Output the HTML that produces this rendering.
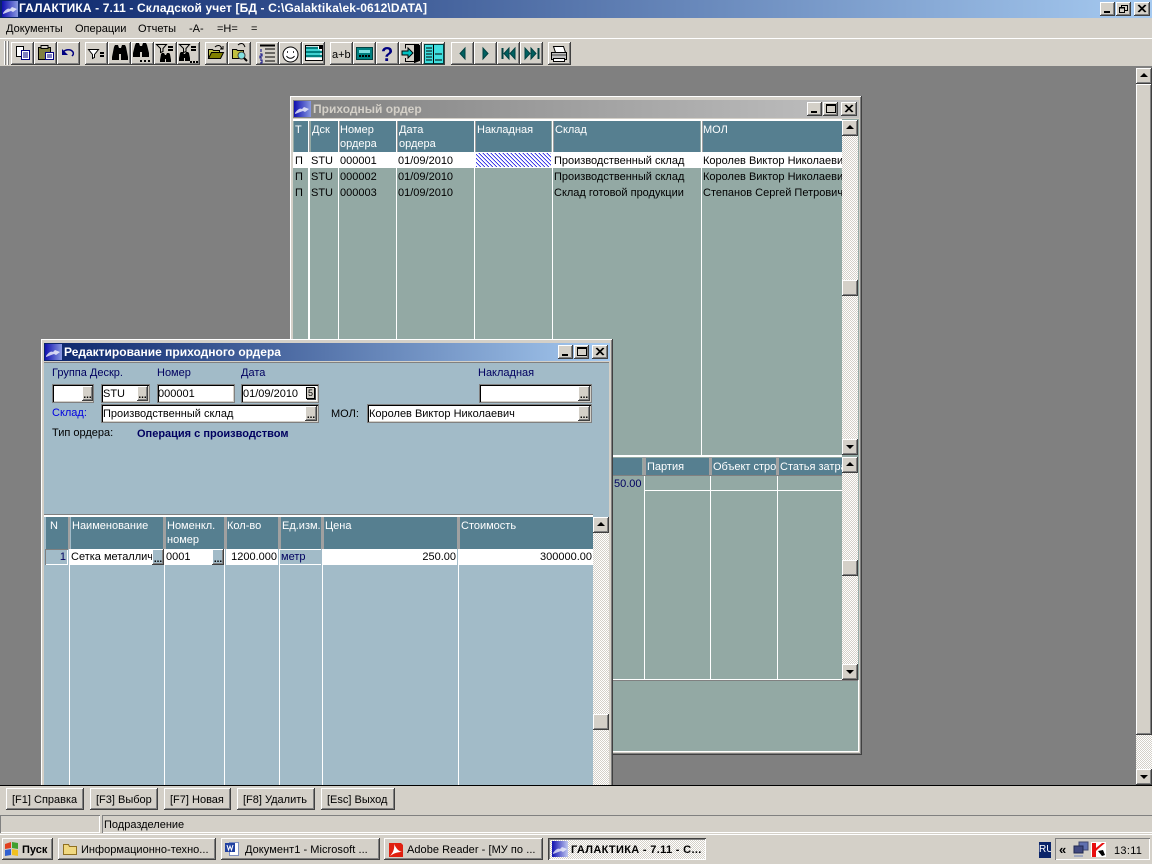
<!DOCTYPE html>
<html><head><meta charset="utf-8"><style>
html,body{margin:0;padding:0;width:1152px;height:864px;overflow:hidden;background:#808080}
div{position:absolute;box-sizing:border-box}
.t{position:absolute;white-space:nowrap;font:11px/13px "Liberation Sans","Noto Sans CJK SC",sans-serif;color:#000;margin-top:2px}
.w{color:#fff}.n{color:#000060}
.b{font-weight:bold;font-size:12px}
.r{box-shadow:inset -1px -1px #404040,inset 1px 1px #fff,inset -2px -2px #808080;background:#d4d0c8}
.c{background:repeating-conic-gradient(#fff 0 25%,#d4d0c8 0 50%) 0 0/2px 2px}
.h{background:#567f90}
.l{background:#fff}
.f{background:#fff;box-shadow:inset 1px 1px #000,inset -1px -1px #d4d0c8;outline:1px solid #808080;outline-offset:0}
.d{font:bold 10px/9px "Liberation Sans",sans-serif;text-align:center;color:#000;letter-spacing:0}
svg{position:absolute;display:block}
</style></head><body>

<!-- Title bar -->
<div style="left:0;top:0;width:1152px;height:18px;background:linear-gradient(90deg,#0a246a,#a6caf0)"></div>
<div style="left:2px;top:1px;width:16px;height:16px;background:linear-gradient(90deg,#1010b0,#8898e0)"></div>
<svg style="left:2px;top:1px" width="16" height="16"><path d="M1 12C4 8 6 7 8 8L10 6l5 2-4 3-2-1C6 11 4 12 1 13z" fill="#fff" opacity=".75"/></svg>
<div class="t w b" style="left:19px;top:0;letter-spacing:.13px">ГАЛАКТИКА - 7.11 - Складской учет [БД - C:\Galaktika\ek-0612\DATA]</div>
<div class="r" style="left:1100px;top:2px;width:15px;height:14px"></div>
<div style="left:1104px;top:11px;width:6px;height:2px;background:#000"></div>
<div class="r" style="left:1116px;top:2px;width:15px;height:14px"></div>
<svg style="left:1116px;top:2px" width="15" height="14"><path d="M5.500 5.500V3.500h6v5h-3M3.500 5.500h5v5h-5z" fill="none" stroke="#000"/><path d="M5 3.500h7M3 6h6" stroke="#000"/></svg>
<div class="r" style="left:1134px;top:2px;width:16px;height:14px"></div>
<svg style="left:1134px;top:2px" width="16" height="14"><path d="M4 3l7 7M5 3l7 7M11 3l-7 7M12 3l-7 7" stroke="#000"/></svg>

<!-- Menu -->
<div style="left:0;top:18px;width:1152px;height:20px;background:#d4d0c8"></div>
<div class="t" style="left:6px;top:21px">Документы</div>
<div class="t" style="left:75px;top:21px">Операции</div>
<div class="t" style="left:138px;top:21px">Отчеты</div>
<div class="t" style="left:189px;top:21px">-А-</div>
<div class="t" style="left:217px;top:21px">=Н=</div>
<div class="t" style="left:251px;top:21px">=</div>

<!-- Toolbar -->
<div style="left:0;top:38px;width:1152px;height:29px;background:#d4d0c8;border-top:1px solid #fff;border-bottom:1px solid #808080"></div>
<div style="left:4px;top:41px;width:2px;height:24px;background:#fff;border-right:1px solid #808080"></div>
<div style="left:7px;top:41px;width:2px;height:24px;background:#fff;border-right:1px solid #808080"></div>
<div class="r" style="left:11px;top:42px;width:23px;height:23px"></div>
<div class="r" style="left:34px;top:42px;width:23px;height:23px"></div>
<div class="r" style="left:57px;top:42px;width:23px;height:23px"></div>
<div class="r" style="left:85px;top:42px;width:23px;height:23px"></div>
<div class="r" style="left:108px;top:42px;width:23px;height:23px"></div>
<div class="r" style="left:131px;top:42px;width:23px;height:23px"></div>
<div class="r" style="left:154px;top:42px;width:23px;height:23px"></div>
<div class="r" style="left:177px;top:42px;width:23px;height:23px"></div>
<div class="r" style="left:205px;top:42px;width:23px;height:23px"></div>
<div class="r" style="left:228px;top:42px;width:23px;height:23px"></div>
<div class="r" style="left:256px;top:42px;width:23px;height:23px"></div>
<div class="r" style="left:279px;top:42px;width:23px;height:23px"></div>
<div class="r" style="left:302px;top:42px;width:23px;height:23px"></div>
<div class="r" style="left:330px;top:42px;width:23px;height:23px"></div>
<div class="r" style="left:353px;top:42px;width:23px;height:23px"></div>
<div class="r" style="left:376px;top:42px;width:23px;height:23px"></div>
<div class="r" style="left:399px;top:42px;width:23px;height:23px"></div>
<div class="r" style="left:422px;top:42px;width:23px;height:23px"></div>
<div class="r" style="left:451px;top:42px;width:23px;height:23px"></div>
<div class="r" style="left:474px;top:42px;width:23px;height:23px"></div>
<div class="r" style="left:497px;top:42px;width:23px;height:23px"></div>
<div class="r" style="left:520px;top:42px;width:23px;height:23px"></div>
<div class="r" style="left:548px;top:42px;width:23px;height:23px"></div>

<svg style="left:0;top:38px" width="580" height="29" fill="none" stroke="#000">
<!-- copy -->
<path d="M16.500 8.500h7v10h-7z" fill="#fff"/><path d="M21.500 12.500h8v9h-8z" fill="#fff" stroke="#000080"/><path d="M23 15h5M23 17h5M23 19h5" stroke="#000080"/>
<!-- paste -->
<path d="M38.500 9.500h12v12h-12z" fill="#808040"/><path d="M41 7.500h7v3h-7z" fill="#d4d0c8"/><path d="M45.500 14.500h8v7h-8z" fill="#fff" stroke="#000080"/><path d="M47 17h5M47 19h5" stroke="#000080"/>
<!-- undo -->
<path d="M63 14c3-3 8-3 10 0 1 2 0 3-1 4" stroke="#000080" stroke-width="1.500"/><path d="M62 11v6h6z" fill="#000080" stroke="none"/>
<!-- filter= -->
<path d="M88.500 11.500h10l-4 5v3l-2 1v-4z" fill="#fff"/><path d="M100 15h4M100 18h4" stroke-width="2"/>
<!-- binoculars -->
<path d="M112 19l2-10 1-2h3l1 3h2l1-3h3l1 2 2 10v3h-7v-6h-2v6h-7z" fill="#000" stroke="none"/>
<path d="M133 15l2-8 1-2h3l1 3h2l1-3h3l1 2 2 8v4h-7v-5h-2v5h-7z" fill="#000" stroke="none"/><path d="M140 23h2M144 23h2M148 23h2" stroke-width="2"/>
<!-- filter binoc -->
<path d="M156.500 6.500h10l-3.500 4v3l-2.500 1v-4z"/><path d="M168 9h5M168 12h5" stroke-width="2"/><path d="M160 22l1-6 1-1h2l1 2h1l1-2h2l1 1 1 6v2h-5v-3h-1v3h-5z" fill="#000" stroke="none"/>
<path d="M179.500 6.500h10l-3.500 4v3l-2.500 1v-4z"/><path d="M191 9h5M191 12h5" stroke-width="2"/><path d="M179 20l1-5 1-1h2l1 2h1l1-2h2l1 1 1 5v3h-5v-3h-1v3h-5z" fill="#000" stroke="none"/><path d="M190 24h2M193 24h2M196 24h2" stroke-width="2"/>
<!-- open folders -->
<path d="M208.500 11.500h4l1 1h6v8h-11z" fill="#c0c040"/><path d="M208.500 20.500l3-6h12l-3 6z" fill="#808000"/><path d="M215 9c2-2 5-2 6 0l1 2m1-3v3h-3"/>
<path d="M232.500 11.500h4l1 1h6v8h-11z" fill="#c0c040"/><path d="M238 7c2-2 5-2 6 0l1 2"/><circle cx="241.500" cy="17.500" r="3.500" fill="#80e0e0" stroke="#404040"/><path d="M244 20l3 3" stroke-width="2"/>
<!-- list -->
<path d="M265 11h10M265 15h10M265 19h10M265 23h10"/><path d="M260 7.500h15" stroke-width="2"/><path d="M261 11v3M260 16h2v2h-2v2h2M260 22h2v3h-2" stroke="#000080"/>
<!-- smile -->
<circle cx="290.500" cy="16.500" r="7.500" fill="#fff"/><path d="M287 14h1M293 14h1" stroke-width="1.500"/><path d="M286.500 18c2 3 6 3 8 0"/>
<!-- form -->
<path d="M305.500 7.500h17v15h-17z" fill="#fff"/><path d="M306 10h12M306 14h16M306 18h16" stroke="#008080" stroke-width="2.500"/><path d="M306 12h14M306 16h14" stroke="#00e0e0"/><path d="M319.500 8.500h3v2h-3z" fill="#000"/>
<!-- a+b -->
<text x="332" y="20" font-family="Liberation Sans" font-size="11" fill="#000" stroke="none">a+b</text>
<!-- calc -->
<path d="M356.500 9.500h16v12h-16z" fill="#008080" stroke="#004040"/><path d="M359 12h11v3h-11z" fill="#80e0e0" stroke="none"/><path d="M359 18h11" stroke="#000" stroke-dasharray="2 1" stroke-width="2"/>
<!-- ? -->
<text x="381" y="23" font-family="Liberation Sans" font-weight="bold" font-size="20" fill="#000080" stroke="none">?</text>
<!-- door -->
<path d="M414.500 6.500v18l5-2v-15z" fill="#000"/><path d="M405 6.500h14M405 23.500h9M405.500 6.500v4M405.500 20v3"/><path d="M402 13h6v-3l5 5-5 5v-3h-6z" fill="#00c0c0" stroke="#000"/>
<!-- columns -->
<path d="M424.500 6.500h19v19h-19z" fill="#40e0e0" stroke="#004040"/><path d="M433.500 6.500v19M426 10h6M426 13h6M426 16h6M426 19h6M426 22h6M435 16h7M435 22h7"/>
<!-- nav -->
<path d="M465 10v11l-5-5.500z" fill="#006060" stroke="#004040"/>
<path d="M483 10v11l5-5.500z" fill="#006060" stroke="#004040"/>
<path d="M502.500 10v11" stroke-width="2" stroke="#004040"/><path d="M509 10v11l-5-5.500zM515 10v11l-5-5.500z" fill="#006060" stroke="#004040"/>
<path d="M538.500 10v11" stroke-width="2" stroke="#004040"/><path d="M525 10v11l5-5.500zM531 10v11l5-5.500z" fill="#006060" stroke="#004040"/>
<!-- print -->
<path d="M553.500 8.500h10l2 6h-10z" fill="#fff"/><path d="M551.500 14.500h15v7h-15z" fill="#c0c0c0"/><path d="M552 17h14" stroke="#404040"/><path d="M553.500 20.500h11v3h-11z" fill="#fff"/>
</svg>

<!-- Right main scrollbar -->
<div class="c" style="left:1136px;top:68px;width:16px;height:717px"></div>
<div class="r" style="left:1136px;top:84px;width:16px;height:651px"></div>
<div class="r" style="left:1136px;top:68px;width:16px;height:16px"></div>
<svg style="left:1136px;top:68px" width="16" height="16"><path d="M8 5l4 4H4z"/></svg>
<div class="r" style="left:1136px;top:769px;width:16px;height:16px"></div>
<svg style="left:1136px;top:769px" width="16" height="16"><path d="M4 6h8l-4 4z"/></svg>

<!-- WINDOW 1 -->
<div style="left:290px;top:96px;width:572px;height:659px;background:#d4d0c8;box-shadow:inset -1px -1px #404040,inset 1px 1px #fff,inset -2px -2px #808080"></div>
<div style="left:293px;top:100px;width:566px;height:18px;background:linear-gradient(90deg,#808080,#c0c0c0)"></div>
<div style="left:294px;top:101px;width:17px;height:16px;background:linear-gradient(90deg,#1010b0,#8898e0)"></div>
<svg style="left:294px;top:101px" width="17" height="16"><path d="M1 12C4 8 6 7 8 8L10 6l5 2-4 3-2-1C6 11 4 12 1 13z" fill="#fff" opacity=".75"/></svg>
<div class="t b" style="left:313px;top:101px;color:#d4d0c8">Приходный ордер</div>
<div class="r" style="left:807px;top:102px;width:15px;height:14px"></div>
<div style="left:811px;top:111px;width:6px;height:2px;background:#000"></div>
<div class="r" style="left:823px;top:102px;width:15px;height:14px"></div>
<div style="left:826px;top:104px;width:10px;height:9px;border:1px solid #000;border-top-width:2px"></div>
<div class="r" style="left:841px;top:102px;width:16px;height:14px"></div>
<svg style="left:841px;top:102px" width="16" height="14"><path d="M4 3l7 7M5 3l7 7M11 3l-7 7M12 3l-7 7" stroke="#000"/></svg>

<div style="left:293px;top:119px;width:566px;height:633px;background:#93a9a4"></div>
<div class="l" style="left:293px;top:119px;width:549px;height:2px"></div>
<!-- headers -->
<div class="h" style="left:294px;top:121px;width:14px;height:31px"></div>
<div class="h" style="left:311px;top:121px;width:27px;height:31px"></div>
<div class="h" style="left:340px;top:121px;width:56px;height:31px"></div>
<div class="h" style="left:398px;top:121px;width:76px;height:31px"></div>
<div class="h" style="left:476px;top:121px;width:75px;height:31px"></div>
<div class="h" style="left:554px;top:121px;width:146px;height:31px"></div>
<div class="h" style="left:703px;top:121px;width:139px;height:31px"></div>
<!-- row 1 -->
<div class="l" style="left:293px;top:152px;width:549px;height:16px"></div>
<div style="left:476px;top:153px;width:75px;height:14px;background:repeating-linear-gradient(45deg,#0000e0 0 1px,#fff 1px 2.830px)"></div>
<!-- vertical lines -->
<div class="l" style="left:308px;top:121px;width:2px;height:334px"></div>
<div class="l" style="left:338px;top:121px;width:1px;height:334px"></div>
<div class="l" style="left:396px;top:121px;width:1px;height:334px"></div>
<div class="l" style="left:474px;top:121px;width:1px;height:334px"></div>
<div class="l" style="left:552px;top:121px;width:1px;height:334px"></div>
<div class="l" style="left:701px;top:121px;width:1px;height:334px"></div>
<div style="left:309px;top:121px;width:1px;height:31px;background:#a0a0a0"></div>
<div style="left:339px;top:121px;width:1px;height:31px;background:#a0a0a0"></div>
<div style="left:397px;top:121px;width:1px;height:31px;background:#a0a0a0"></div>
<div style="left:475px;top:121px;width:1px;height:31px;background:#a0a0a0"></div>
<div style="left:553px;top:121px;width:1px;height:31px;background:#a0a0a0"></div>
<div style="left:702px;top:121px;width:1px;height:31px;background:#a0a0a0"></div>
<!-- header text -->
<div class="t w" style="left:295px;top:122px">Т</div>
<div class="t w" style="left:312px;top:122px">Дск</div>
<div class="t w" style="left:340px;top:122px">Номер</div>
<div class="t w" style="left:340px;top:136px">ордера</div>
<div class="t w" style="left:399px;top:122px">Дата</div>
<div class="t w" style="left:399px;top:136px">ордера</div>
<div class="t w" style="left:477px;top:122px">Накладная</div>
<div class="t w" style="left:555px;top:122px">Склад</div>
<div class="t w" style="left:703px;top:122px">МОЛ</div>
<!-- rows -->
<div class="t" style="left:295px;top:153px">П</div><div class="t" style="left:311px;top:153px">STU</div><div class="t" style="left:340px;top:153px">000001</div><div class="t" style="left:398px;top:153px">01/09/2010</div><div class="t" style="left:554px;top:153px">Производственный склад</div><div class="t" style="left:703px;top:153px;width:139px;overflow:hidden">Королев Виктор Николаевич</div>
<div class="t" style="left:295px;top:169px">П</div><div class="t" style="left:311px;top:169px">STU</div><div class="t" style="left:340px;top:169px">000002</div><div class="t" style="left:398px;top:169px">01/09/2010</div><div class="t" style="left:554px;top:169px">Производственный склад</div><div class="t" style="left:703px;top:169px;width:139px;overflow:hidden">Королев Виктор Николаевич</div>
<div class="t" style="left:295px;top:185px">П</div><div class="t" style="left:311px;top:185px">STU</div><div class="t" style="left:340px;top:185px">000003</div><div class="t" style="left:398px;top:185px">01/09/2010</div><div class="t" style="left:554px;top:185px">Склад готовой продукции</div><div class="t" style="left:703px;top:185px;width:139px;overflow:hidden">Степанов Сергей Петрович</div>
<!-- upper scrollbar -->
<div class="c" style="left:842px;top:120px;width:16px;height:335px"></div>
<div class="r" style="left:842px;top:120px;width:16px;height:16px"></div>
<svg style="left:842px;top:120px" width="16" height="16"><path d="M8 5l4 4H4z"/></svg>
<div class="r" style="left:842px;top:280px;width:16px;height:16px"></div>
<div class="r" style="left:842px;top:439px;width:16px;height:16px"></div>
<svg style="left:842px;top:439px" width="16" height="16"><path d="M4 6h8l-4 4z"/></svg>
<!-- lower grid -->
<div class="l" style="left:293px;top:455px;width:549px;height:2px"></div>
<div class="h" style="left:600px;top:458px;width:42px;height:17px"></div>
<div class="h" style="left:646px;top:458px;width:63px;height:17px"></div>
<div class="h" style="left:712px;top:458px;width:64px;height:17px"></div>
<div class="h" style="left:779px;top:458px;width:63px;height:17px"></div>
<div class="l" style="left:644px;top:457px;width:1px;height:222px"></div>
<div class="l" style="left:710px;top:457px;width:1px;height:222px"></div>
<div class="l" style="left:777px;top:457px;width:1px;height:222px"></div>
<div style="left:643px;top:457px;width:3px;height:18px;background:#a0a0a0"></div>
<div style="left:709px;top:457px;width:3px;height:18px;background:#a0a0a0"></div>
<div style="left:776px;top:457px;width:3px;height:18px;background:#a0a0a0"></div>
<div style="left:600px;top:475px;width:242px;height:1px;background:#808080"></div>
<div class="l" style="left:644px;top:490px;width:198px;height:1px"></div>
<div class="t w" style="left:647px;top:459px">Партия</div>
<div class="t w" style="left:713px;top:459px;width:63px;overflow:hidden">Объект строительства</div>
<div class="t w" style="left:780px;top:459px;width:62px;overflow:hidden">Статья затрат</div>
<div class="t n" style="left:614px;top:476px">50.00</div>
<!-- lower scrollbar -->
<div class="c" style="left:842px;top:457px;width:16px;height:223px"></div>
<div class="r" style="left:842px;top:457px;width:16px;height:16px"></div>
<svg style="left:842px;top:457px" width="16" height="16"><path d="M8 5l4 4H4z"/></svg>
<div class="r" style="left:842px;top:560px;width:16px;height:16px"></div>
<div class="r" style="left:842px;top:664px;width:16px;height:16px"></div>
<svg style="left:842px;top:664px" width="16" height="16"><path d="M4 6h8l-4 4z"/></svg>
<!-- bottom panel -->
<div style="left:293px;top:679px;width:549px;height:1px;background:#fff"></div>
<div style="left:293px;top:680px;width:565px;height:1px;background:#808080"></div>
<div class="l" style="left:293px;top:751px;width:566px;height:1px"></div>
<div class="l" style="left:858px;top:680px;width:1px;height:72px"></div>

<!-- WINDOW 2 -->
<div style="left:41px;top:339px;width:572px;height:460px;background:#d4d0c8;box-shadow:inset -1px 0 #404040,inset 1px 1px #fff,inset -2px 0 #808080"></div>
<div style="left:44px;top:343px;width:566px;height:18px;background:linear-gradient(90deg,#0a246a,#a6caf0)"></div>
<div style="left:45px;top:344px;width:17px;height:16px;background:linear-gradient(90deg,#1010b0,#8898e0)"></div>
<svg style="left:45px;top:344px" width="17" height="16"><path d="M1 12C4 8 6 7 8 8L10 6l5 2-4 3-2-1C6 11 4 12 1 13z" fill="#fff" opacity=".75"/></svg>
<div class="t w b" style="left:64px;top:344px">Редактирование приходного ордера</div>
<div class="r" style="left:558px;top:345px;width:15px;height:14px"></div>
<div style="left:562px;top:354px;width:6px;height:2px;background:#000"></div>
<div class="r" style="left:574px;top:345px;width:15px;height:14px"></div>
<div style="left:577px;top:347px;width:10px;height:9px;border:1px solid #000;border-top-width:2px"></div>
<div class="r" style="left:592px;top:345px;width:16px;height:14px"></div>
<svg style="left:592px;top:345px" width="16" height="14"><path d="M4 3l7 7M5 3l7 7M11 3l-7 7M12 3l-7 7" stroke="#000"/></svg>
<div style="left:44px;top:362px;width:565px;height:430px;background:#a2bbc8;border-top:1px solid #808080"></div>

<div class="t n" style="left:52px;top:365px">Группа Дескр.</div>
<div class="t n" style="left:157px;top:365px">Номер</div>
<div class="t n" style="left:241px;top:365px">Дата</div>
<div class="t n" style="left:478px;top:365px">Накладная</div>

<div class="f" style="left:53px;top:385px;width:40px;height:17px"></div>
<div class="r d" style="left:82px;top:386px;width:11px;height:15px;padding-top:5px">...</div>
<div class="f" style="left:102px;top:385px;width:47px;height:17px"></div>
<div class="r d" style="left:137px;top:386px;width:11px;height:15px;padding-top:5px">...</div>
<div class="t" style="left:103px;top:386px">STU</div>
<div class="f" style="left:158px;top:385px;width:76px;height:17px"></div>
<div class="t" style="left:158px;top:386px">000001</div>
<div class="f" style="left:242px;top:385px;width:76px;height:17px"></div>
<div class="t" style="left:243px;top:386px">01/09/2010</div>
<div style="left:306px;top:387px;width:9px;height:12px;border:1px solid #000;background:#d4d0c8;font:9px/10px 'Liberation Sans',sans-serif;text-align:center;box-shadow:1px 1px #404040">5</div>
<div class="f" style="left:480px;top:385px;width:111px;height:17px"></div>
<div class="r d" style="left:578px;top:386px;width:12px;height:15px;padding-top:5px">...</div>

<div class="t" style="left:52px;top:405px;color:#0000e0">Склад:</div>
<div class="f" style="left:102px;top:405px;width:216px;height:17px"></div>
<div class="t" style="left:103px;top:406px">Производственный склад</div>
<div class="r d" style="left:305px;top:406px;width:12px;height:15px;padding-top:5px">...</div>
<div class="t" style="left:331px;top:406px">МОЛ:</div>
<div class="f" style="left:368px;top:405px;width:223px;height:17px"></div>
<div class="t" style="left:369px;top:406px">Королев Виктор Николаевич</div>
<div class="r d" style="left:578px;top:406px;width:12px;height:15px;padding-top:5px">...</div>

<div class="t" style="left:52px;top:425px">Тип ордера:</div>
<div class="t" style="left:137px;top:426px;font-weight:bold;color:#000060">Операция с производством</div>

<!-- grid -->
<div style="left:44px;top:514px;width:549px;height:1px;background:#808080"></div>
<div class="l" style="left:44px;top:515px;width:549px;height:2px"></div>
<div class="h" style="left:46px;top:517px;width:22px;height:32px"></div>
<div class="h" style="left:71px;top:517px;width:92px;height:32px"></div>
<div class="h" style="left:166px;top:517px;width:58px;height:32px"></div>
<div class="h" style="left:227px;top:517px;width:51px;height:32px"></div>
<div class="h" style="left:281px;top:517px;width:40px;height:32px"></div>
<div class="h" style="left:324px;top:517px;width:133px;height:32px"></div>
<div class="h" style="left:460px;top:517px;width:133px;height:32px"></div>
<div class="l" style="left:70px;top:549px;width:93px;height:16px"></div>
<div class="l" style="left:165px;top:549px;width:59px;height:16px"></div>
<div class="l" style="left:226px;top:549px;width:52px;height:16px"></div>
<div class="l" style="left:323px;top:549px;width:134px;height:16px"></div>
<div class="l" style="left:459px;top:549px;width:134px;height:16px"></div>
<div class="l" style="left:280px;top:549px;width:41px;height:1px"></div>
<div class="l" style="left:280px;top:564px;width:41px;height:1px"></div>
<div style="left:45px;top:549px;width:23px;height:16px;box-shadow:inset 1px 1px #808080,inset -1px -1px #fff"></div>
<div class="l" style="left:69px;top:517px;width:1px;height:275px"></div>
<div class="l" style="left:164px;top:517px;width:1px;height:275px"></div>
<div class="l" style="left:224px;top:517px;width:1px;height:275px"></div>
<div class="l" style="left:279px;top:517px;width:1px;height:275px"></div>
<div class="l" style="left:322px;top:517px;width:1px;height:275px"></div>
<div class="l" style="left:458px;top:517px;width:1px;height:275px"></div>
<div style="left:68px;top:517px;width:2px;height:32px;background:#a0a0a0"></div>
<div style="left:163px;top:517px;width:3px;height:32px;background:#a0a0a0"></div>
<div style="left:224px;top:517px;width:3px;height:32px;background:#a0a0a0"></div>
<div style="left:278px;top:517px;width:3px;height:32px;background:#a0a0a0"></div>
<div style="left:321px;top:517px;width:3px;height:32px;background:#a0a0a0"></div>
<div style="left:457px;top:517px;width:3px;height:32px;background:#a0a0a0"></div>
<div class="t w" style="left:50px;top:518px">N</div>
<div class="t w" style="left:72px;top:518px">Наименование</div>
<div class="t w" style="left:167px;top:518px">Номенкл.</div>
<div class="t w" style="left:167px;top:532px">номер</div>
<div class="t w" style="left:227px;top:518px">Кол-во</div>
<div class="t w" style="left:282px;top:518px">Ед.изм.</div>
<div class="t w" style="left:325px;top:518px">Цена</div>
<div class="t w" style="left:461px;top:518px">Стоимость</div>

<div class="t n" style="left:45px;top:549px;width:21px;text-align:right">1</div>
<div class="t" style="left:71px;top:549px;width:82px;overflow:hidden">Сетка металлическая</div>
<div class="r d" style="left:152px;top:549px;width:12px;height:16px;padding-top:6px;background:#a2bbc8">...</div>
<div class="t" style="left:166px;top:549px">0001</div>
<div class="r d" style="left:212px;top:549px;width:12px;height:16px;padding-top:6px;background:#a2bbc8">...</div>
<div class="t" style="left:226px;top:549px;width:51px;text-align:right">1200.000</div>
<div class="t n" style="left:281px;top:549px">метр</div>
<div class="t" style="left:323px;top:549px;width:133px;text-align:right">250.00</div>
<div class="t" style="left:459px;top:549px;width:133px;text-align:right">300000.00</div>
<!-- win 2 scrollbar -->
<div class="c" style="left:593px;top:517px;width:16px;height:275px"></div>
<div class="r" style="left:593px;top:517px;width:16px;height:16px"></div>
<svg style="left:593px;top:517px" width="16" height="16"><path d="M8 5l4 4H4z"/></svg>
<div class="r" style="left:593px;top:714px;width:16px;height:16px"></div>

<!-- Bottom buttons bar -->
<div style="left:0;top:785px;width:1152px;height:49px;background:#d4d0c8;border-top:1px solid #000"></div>
<div class="r" style="left:6px;top:788px;width:78px;height:22px"></div>
<div class="r" style="left:90px;top:788px;width:68px;height:22px"></div>
<div class="r" style="left:164px;top:788px;width:67px;height:22px"></div>
<div class="r" style="left:237px;top:788px;width:78px;height:22px"></div>
<div class="r" style="left:321px;top:788px;width:74px;height:22px"></div>
<div class="t" style="left:12px;top:792px">[F1] Справка</div>
<div class="t" style="left:96px;top:792px">[F3] Выбор</div>
<div class="t" style="left:170px;top:792px">[F7] Новая</div>
<div class="t" style="left:243px;top:792px">[F8] Удалить</div>
<div class="t" style="left:327px;top:792px">[Esc] Выход</div>

<!-- Status -->
<div style="left:0;top:815px;width:100px;height:18px;box-shadow:inset 1px 1px #808080,inset -1px -1px #fff"></div>
<div style="left:102px;top:815px;width:1050px;height:18px;box-shadow:inset 1px 1px #808080,inset 0 -1px #fff"></div>
<div class="t" style="left:104px;top:817px">Подразделение</div>

<!-- Taskbar -->
<div style="left:0;top:834px;width:1152px;height:30px;background:#d4d0c8;border-top:1px solid #fff"></div>
<div class="r" style="left:2px;top:838px;width:51px;height:22px"></div>
<svg style="left:4px;top:841px" width="16" height="16"><path d="M1 3l6-2v6l-6 1z" fill="#e04020"/><path d="M8 1l6 1v6l-6-1z" fill="#40a030"/><path d="M1 9l6-1v6l-6 1z" fill="#3060d0"/><path d="M8 8l6 1v6l-6-1z" fill="#f0c020"/></svg>
<div class="t" style="left:22px;top:842px;font-weight:bold">Пуск</div>
<div class="r" style="left:58px;top:838px;width:158px;height:22px"></div>
<svg style="left:62px;top:841px" width="16" height="16"><path d="M1.500 3.500h5l1 2h7v8h-13z" fill="#f0d880" stroke="#907020"/></svg>
<div class="t" style="left:81px;top:842px;letter-spacing:.02px">Информационно-техно...</div>
<div class="r" style="left:221px;top:838px;width:159px;height:22px"></div>
<svg style="left:225px;top:841px" width="16" height="16"><path d="M4.500 1.500h9v13h-9z" fill="#fff" stroke="#8090c0"/><path d="M0 2h10v9H0z" fill="#2040a0"/><path d="M2 4l1.500 5L5 5l1.500 4L8 4" stroke="#fff" fill="none"/></svg>
<div class="t" style="left:245px;top:842px;letter-spacing:.05px">Документ1 - Microsoft ...</div>
<div class="r" style="left:384px;top:838px;width:159px;height:22px"></div>
<svg style="left:389px;top:841px" width="15" height="16"><path d="M0 2h12l2 2v12H0z" fill="#e02010"/><path d="M1 15c3-3 5-8 4-12 2 4 4 7 8 8-4 0-8 1-12 4z" fill="#fff"/></svg>
<div class="t" style="left:407px;top:842px;letter-spacing:.05px">Adobe Reader - [МУ по ...</div>
<div class="c" style="left:548px;top:838px;width:158px;height:22px;box-shadow:inset 1px 1px #404040,inset -1px -1px #fff,inset 2px 2px #808080"></div>
<div style="left:552px;top:841px;width:16px;height:16px;background:linear-gradient(90deg,#1010b0,#c0c8f0)"></div>
<svg style="left:552px;top:841px" width="16" height="16"><path d="M1 12C4 8 6 7 8 8L10 6l5 2-4 3-2-1C6 11 4 12 1 13z" fill="#fff" opacity=".7"/></svg>
<div class="t" style="left:571px;top:842px;font-weight:bold;letter-spacing:.33px">ГАЛАКТИКА - 7.11 - С...</div>

<div style="left:1039px;top:842px;width:12px;height:16px;background:#0a246a;color:#fff;font:10px/16px 'Liberation Sans',sans-serif;overflow:hidden;white-space:nowrap">RU</div>
<div style="left:1055px;top:838px;width:95px;height:22px;box-shadow:inset 1px 1px #808080,inset -1px -1px #fff"></div>
<div class="t" style="left:1059px;top:841px;font-weight:bold;font-size:13px">«</div>
<svg style="left:1072px;top:841px" width="18" height="17"><path d="M7 1h9v8H7z" fill="#6070b0" stroke="#404870"/><path d="M2 5h9v7H2z" fill="#404880" stroke="#202850"/><path d="M2 14h9v2H2z" fill="#a0a8c0"/></svg>
<svg style="left:1091px;top:842px" width="15" height="16"><path d="M0 0h15v15H0z" fill="#fff"/><path d="M1 1h4v5l6-5h3L7 7l-2 2v6H1z" fill="#e81010"/><path d="M7 9l5-1 2 5-3 1z" fill="#000"/></svg>
<div class="t" style="left:1114px;top:843px;letter-spacing:.3px">13:11</div>
</body></html>
